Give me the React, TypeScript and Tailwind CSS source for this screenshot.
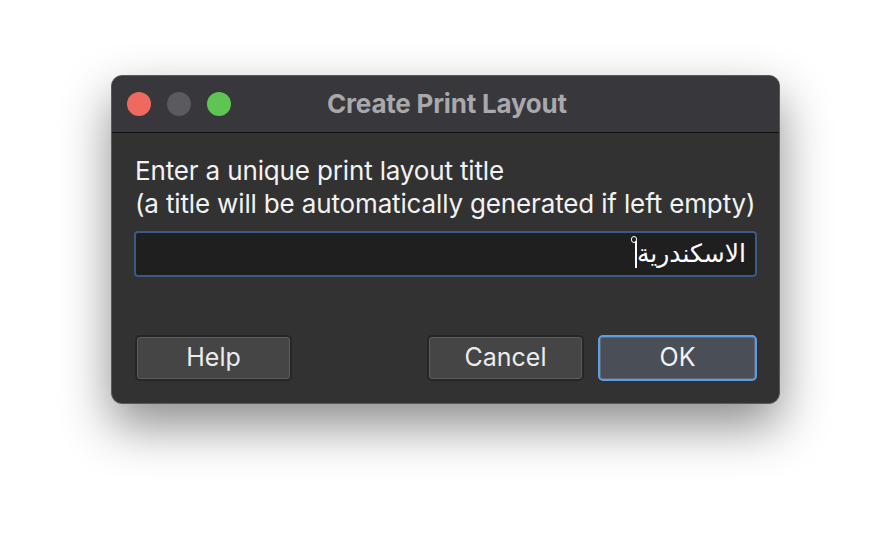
export default function App() {
  return (
    <div className="w-[892px] h-[552px] bg-white pl-[111px] pt-[75px]" style={{ fontFamily: "Inter, 'Noto Sans', sans-serif" }}>
      <div className="w-[669px] h-[329px] rounded-[11px] bg-[#323232] border border-[#5a5a5a] shadow-[0_22px_50px_rgba(0,0,0,0.45)] overflow-hidden flex flex-col">
        {/* title bar */}
        <div className="h-[57px] bg-[#38373c] border-b border-[#111] flex items-center relative shrink-0">
          <div className="flex gap-[16px] pl-[15px]">
            <span className="w-[24px] h-[24px] rounded-full bg-[#ee6a5f]" />
            <span className="w-[24px] h-[24px] rounded-full bg-[#5b5a5f]" />
            <span className="w-[24px] h-[24px] rounded-full bg-[#5ec553]" />
          </div>
          <div className="absolute inset-0 flex items-center justify-center text-[26px] font-bold text-[#a9a8ad] pl-[3px] pb-[2px] tracking-[-0.2px]">
            Create Print Layout
          </div>
        </div>

        {/* body */}
        <div className="flex-1 flex flex-col px-[22px] pt-[21px]">
          <div className="pl-[1px] text-[26px] leading-[33px] text-[#f2f2f2] tracking-[-0.15px]">
            <div>Enter a unique print layout title</div>
            <div>(a title will be automatically generated if left empty)</div>
          </div>

          <div
            dir="rtl"
            className="mt-[11px] h-[46px] w-full rounded-[4px] border-2 border-[#3a5a87] bg-[#1f1f1f] flex items-center px-[9px]"
          >
            <span className="text-[25px] text-white" style={{ fontFamily: "'DejaVu Sans', sans-serif" }}>
              الاسكندرية
            </span>
            <span className="w-[2px] h-[27px] bg-white relative">
              <span className="absolute -top-[5px] -left-[4px] w-[6px] h-[7px] rounded-full border border-white" />
            </span>
          </div>

          <div className="mt-[58px] pl-[1px] flex items-center">
            <button className="w-[157px] h-[46px] rounded-[5px] bg-[#454545] border-2 border-[#262626] shadow-[inset_0_0_0_1px_#5c5c5c] text-[25px] text-[#ececec]">
              Help
            </button>
            <div className="flex-1" />
            <button className="w-[157px] h-[46px] rounded-[5px] bg-[#454545] border-2 border-[#262626] shadow-[inset_0_0_0_1px_#5c5c5c] text-[25px] text-[#ececec]">
              Cancel
            </button>
            <button className="ml-[14px] w-[159px] h-[46px] rounded-[5px] bg-[#4a4e57] border-2 border-[#5c9ee6] shadow-[inset_0_0_0_1px_#626670] text-[25px] text-[#f2f2f2]">
              OK
            </button>
          </div>
        </div>
      </div>
    </div>
  );
}
